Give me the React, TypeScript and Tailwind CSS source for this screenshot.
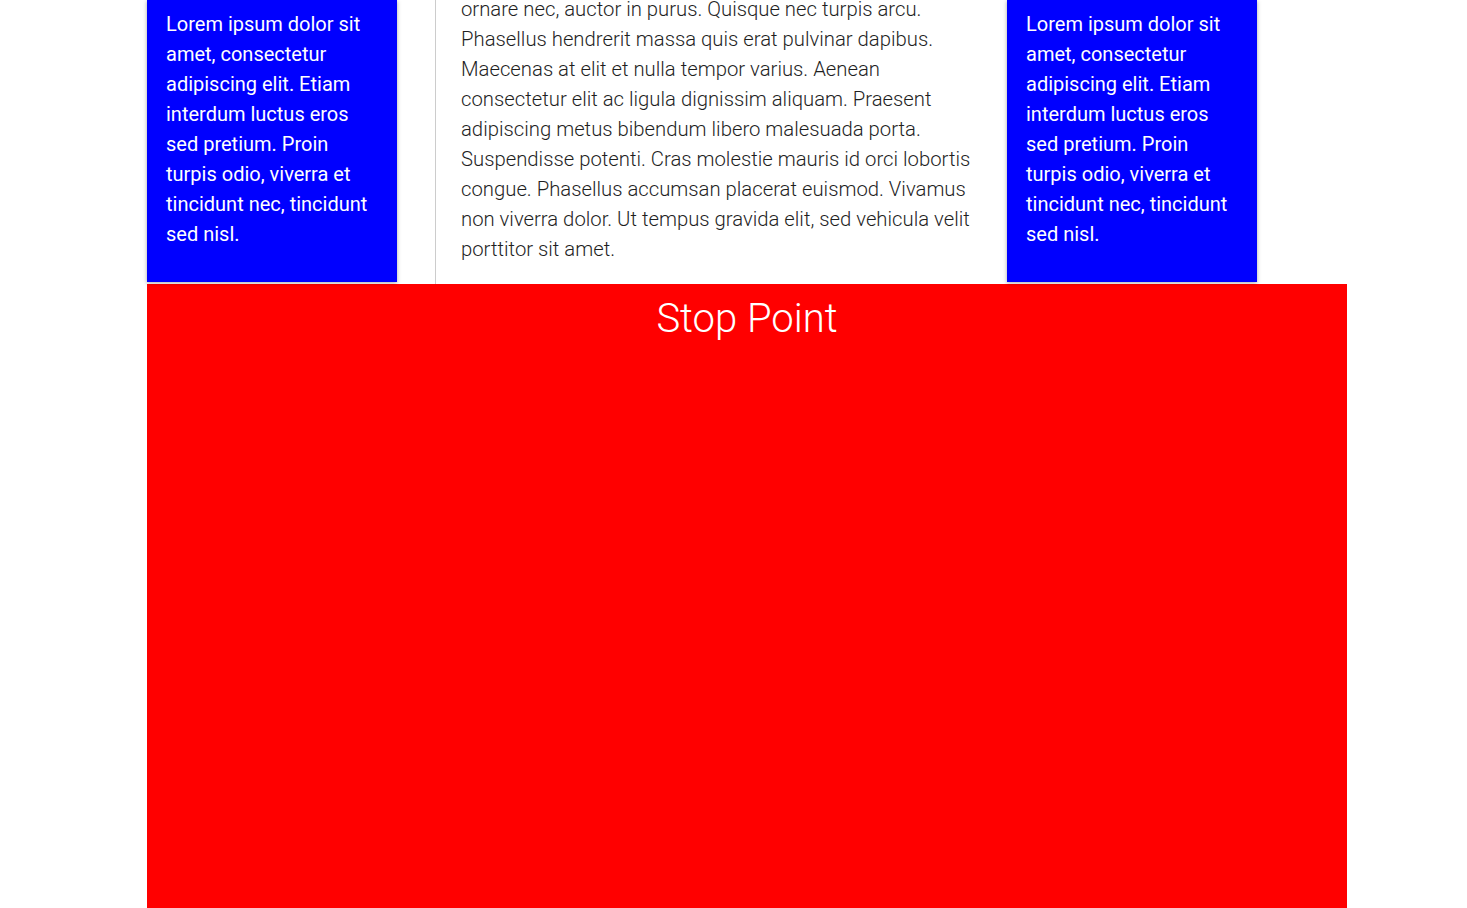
export default function App() {
  const card =
    "Lorem ipsum dolor sit amet, consectetur adipiscing elit. Etiam interdum luctus eros sed pretium. Proin turpis odio, viverra et tincidunt nec, tincidunt sed nisl.";
  const mid =
    "ornare nec, auctor in purus. Quisque nec turpis arcu. Phasellus hendrerit massa quis erat pulvinar dapibus. Maecenas at elit et nulla tempor varius. Aenean consectetur elit ac ligula dignissim aliquam. Praesent adipiscing metus bibendum libero malesuada porta. Suspendisse potenti. Cras molestie mauris id orci lobortis congue. Phasellus accumsan placerat euismod. Vivamus non viverra dolor. Ut tempus gravida elit, sed vehicula velit porttitor sit amet.";
  return (
    <div
      className="h-[908px] overflow-hidden bg-white"
      style={{ fontFamily: "Roboto, 'Noto Sans', sans-serif" }}
    >
      <div className="ml-[147px] w-[1200px]">
        <div className="flex items-start">
          <div className="w-[250px] bg-[#0000ff] pl-[19px] pr-[20px] pt-[9px] pb-[33px] text-[20px] leading-[30px] text-white shadow-[0_1px_4px_rgba(0,0,0,0.35)]">
            {card}
          </div>
          <div className="ml-[38px] w-[572px] border-l border-[#cccccc] pl-[25px] pb-[20px]">
            <p className="-mt-[6px] w-[520px] text-[20.3px] font-light leading-[30px] text-[#1f1f1f]">
              {mid}
            </p>
          </div>
          <div className="w-[250px] bg-[#0000ff] pl-[19px] pr-[20px] pt-[9px] pb-[33px] text-[20px] leading-[30px] text-white shadow-[0_1px_4px_rgba(0,0,0,0.35)]">
            {card}
          </div>
        </div>
        <div className="h-[700px] bg-[#ff0000] pt-[11px] text-center">
          <h1 className="text-[40px] font-light leading-[48px] text-white">
            Stop Point
          </h1>
        </div>
      </div>
    </div>
  );
}
